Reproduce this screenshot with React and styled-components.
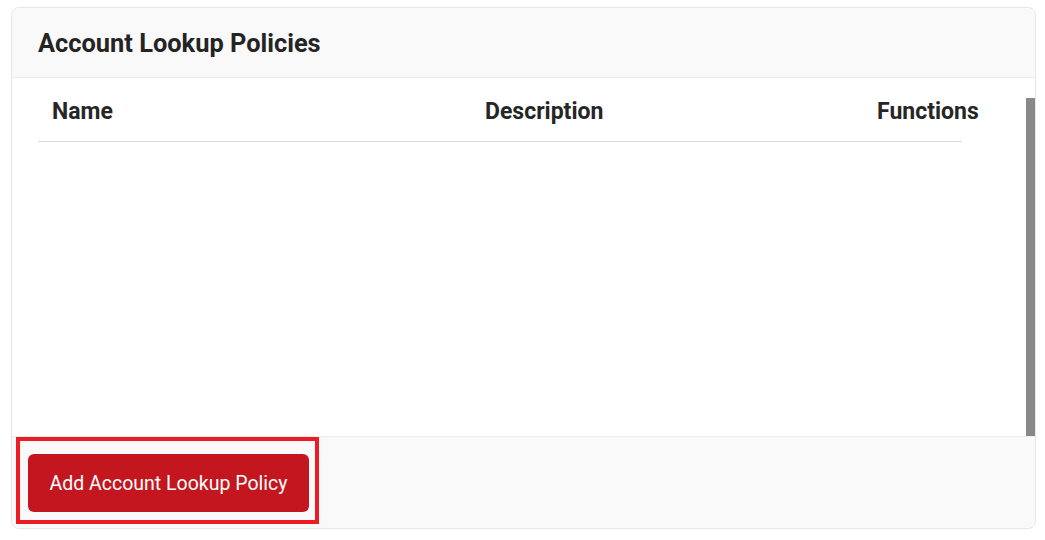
import React from 'react'
import styled, { createGlobalStyle } from 'styled-components'

const GlobalStyle = createGlobalStyle`
    body {
        margin: 0;
        background: #fff;
        font-family: Roboto, "Liberation Sans", sans-serif;
    }
`

const columns = ['Name', 'Description', 'Functions']

const App = () => {
    return (
        <Page>
            <GlobalStyle />
            <Card>
                <CardHeader>
                    <Title>Account Lookup Policies</Title>
                </CardHeader>
                <CardBody>
                    <Table>
                        <HeadRow>
                            {columns.map(c => <HeadCell key={c}>{c}</HeadCell>)}
                        </HeadRow>
                    </Table>
                    <ScrollTrack>
                        <ScrollThumb />
                    </ScrollTrack>
                </CardBody>
                <CardFooter>
                    <Highlight>
                        <AddButton>Add Account Lookup Policy</AddButton>
                    </Highlight>
                </CardFooter>
            </Card>
        </Page>
    )
}

const Page = styled.div`
    padding: 7px 9px 0 11px;
`

const Card = styled.div`
    width: 1025px;
    height: 522px;
    box-sizing: border-box;
    border: 1px solid #e6e6e6;
    border-radius: 8px;
    overflow: hidden;
    display: flex;
    flex-direction: column;
    background: #fff;
`

const CardHeader = styled.div`
    height: 69px;
    flex-shrink: 0;
    background: #f9f9f9;
    border-bottom: 1px solid #ececec;
    display: flex;
    align-items: center;
    padding-left: 26px;
`

const Title = styled.h2`
    margin: 0;
    font-size: 25.4px;
    font-weight: 700;
    color: #242424;
`

const CardBody = styled.div`
    height: 358px;
    flex-shrink: 0;
    display: flex;
    justify-content: space-between;
    padding-left: 26px;
`

const Table = styled.div`
    width: 924px;
    padding-top: 3px;
`

const HeadRow = styled.div`
    display: grid;
    grid-template-columns: 395px 392px 137px;
    border-bottom: 1px solid #dcdcdc;
`

const HeadCell = styled.div`
    padding: 17px 14px 15px;
    font-size: 23px;
    line-height: 28px;
    font-weight: 700;
    color: #262626;
    white-space: nowrap;

    &:nth-child(2),
    &:nth-child(3) {
        padding-left: 52px;
    }
`

const ScrollTrack = styled.div`
    width: 9px;
    padding-top: 20px;
    display: flex;
    flex-direction: column;
`

const ScrollThumb = styled.div`
    flex: 1;
    background: #888;
`

const CardFooter = styled.div`
    flex: 1;
    background: #f9f9f9;
    border-top: 1px solid #ececec;
    padding-left: 4px;
`

const Highlight = styled.div`
    width: fit-content;
    border: 4px solid #ed1c24;
    padding: 13px 6px 8px 8px;
`

const AddButton = styled.button`
    width: 281px;
    height: 58px;
    border: none;
    border-radius: 6px;
    background: #c3161f;
    color: #fff;
    font-family: Roboto, "Liberation Sans", sans-serif;
    font-size: 19.5px;
    font-weight: 400;
    cursor: pointer;
`

export default App
